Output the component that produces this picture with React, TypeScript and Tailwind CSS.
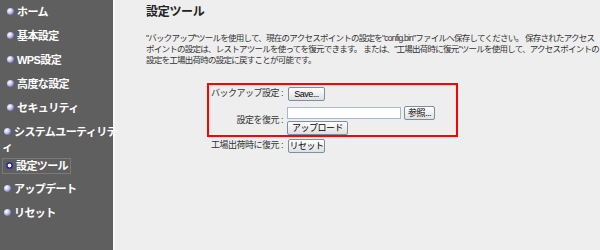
import { FC } from "react";

const menu = [
  { label: "ホーム", indent: true },
  { label: "基本設定", indent: true },
  { label: "WPS設定", indent: true },
  { label: "高度な設定", indent: true },
  { label: "セキュリティ", indent: true },
  { label: "システムユーティリティ", indent: false },
  { label: "設定ツール", indent: false },
  { label: "アップデート", indent: false },
  { label: "リセット", indent: false },
];

const Bullet: FC<{ active?: boolean }> = ({ active }) => (
  <span
    className={`inline-block w-[7px] h-[7px] rounded-full shrink-0 mr-[3px] align-[1px] ${
      active
        ? "bg-[radial-gradient(circle,#ffffff_0%,#ffffff_30%,#2a2ab0_45%,#2a2ab0_100%)]"
        : "bg-[radial-gradient(circle_at_35%_35%,#ffffff_0%,#c8c8f0_40%,#2a2aa0_100%)]"
    }`}
  />
);

const Btn: FC<{ label: string; w: string }> = ({ label, w }) => (
  <button
    className={`${w} h-[14px] leading-[12px] text-[9px] tracking-[-0.5px] whitespace-nowrap text-black border border-[#7b8ea6] rounded-[2px] bg-gradient-to-b from-[#ffffff] to-[#e0e0e0] px-0`}
  >
    {label}
  </button>
);

const App: FC = () => {
  return (
    <div
      className="flex w-[600px] h-[250px] bg-[#eeeeee] text-[#333333] overflow-hidden"
      style={{ fontFamily: '"Liberation Sans", "Noto Sans CJK JP", sans-serif' }}
    >
      <div className="w-[115px] h-full bg-[#5f5f5f] border-r-2 border-[#f8f8f8] shrink-0 pt-[5px]">
        {menu.map((m) => (
          <div
            key={m.label}
            className={`text-[11px] font-bold text-white leading-[15px] tracking-[-0.6px] ${
              m.indent ? "pl-[7px]" : "pl-[4px]"
            } ${m.label === "システムユーティリティ" ? "h-[33px]" : "h-[24px]"}`}
          >
            {m.label === "システムユーティリティ" ? (
              <>
                <span className="whitespace-nowrap">
                  <Bullet />
                  システムユーティリテ
                </span>
                <br />
                <span className="-ml-[2px]">ィ</span>
              </>
            ) : m.label === "設定ツール" ? (
              <span className="inline-block border border-[#7a7a7a] pr-[2px] pl-[3px] -ml-[2px] leading-[14px]">
                <Bullet active />
                {m.label}
              </span>
            ) : (
              <span className="whitespace-nowrap">
                <Bullet />
                {m.label}
              </span>
            )}
          </div>
        ))}
      </div>

      <div className="flex-1 pl-[31px] pt-[4px]">
        <h1 className="text-[12px] font-bold leading-[16px] tracking-[-0.3px] text-[#222222]">設定ツール</h1>
        <p className="mt-[13px] text-[8.5px] leading-[11px] tracking-[-0.75px] whitespace-nowrap">
          "バックアップ"ツールを使用して、現在のアクセスポイントの設定を"config.bin"ファイルへ保存してください。
          保存されたアクセス
          <br />
          ポイントの設定は、レストアツールを使ってを復元できます。 または、"工場出荷時に復元"ツールを使用して、アクセスポイントの
          <br />
          設定を工場出荷時の設定に戻すことが可能です。
        </p>

        <div className="ml-[61px] mt-[17px] w-[251px] h-[54px] border-2 border-[#ff0000] pt-[2px]">
          <div className="flex items-center h-[14px]">
            <div className="w-[76px] text-right text-[9px] tracking-[-0.5px] whitespace-nowrap pr-[2px]">
              バックアップ設定 :
            </div>
            <div className="ml-[3px] flex">
              <Btn label="Save..." w="w-[37px]" />
            </div>
          </div>
          <div className="flex items-center mt-[5px]">
            <div className="w-[76px] text-right text-[9px] tracking-[-0.5px] whitespace-nowrap pr-[2px]">
              設定を復元 :
            </div>
            <div className="ml-[2px] flex flex-col gap-[1px]">
              <div className="flex gap-[3px] items-center">
                <div className="w-[114px] h-[12px] bg-white border border-[#a9b8c8]" />
                <Btn label="参照..." w="w-[31px]" />
              </div>
              <div className="flex">
                <Btn label="アップロード" w="w-[61px]" />
              </div>
            </div>
          </div>
        </div>
        <div className="flex items-center ml-[61px] mt-[2px] h-[14px]">
          <div className="w-[78px] text-right text-[9px] tracking-[-0.5px] whitespace-nowrap pr-[2px]">
            工場出荷時に復元 :
          </div>
          <div className="ml-[3px] flex">
            <Btn label="リセット" w="w-[37px]" />
          </div>
        </div>
      </div>
    </div>
  );
};

export default App;
